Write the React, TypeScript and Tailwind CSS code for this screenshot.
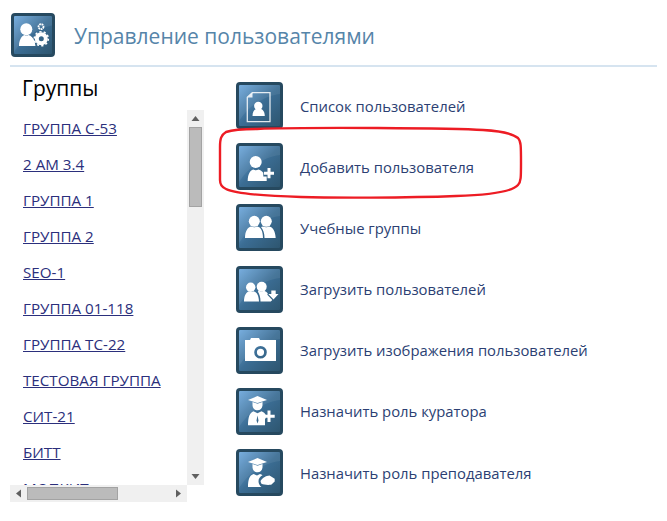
import type { ReactNode } from "react";

const groups = [
  "ГРУППА С-53",
  "2 АМ 3.4",
  "ГРУППА 1",
  "ГРУППА 2",
  "SEO-1",
  "ГРУППА 01-118",
  "ГРУППА ТС-22",
  "ТЕСТОВАЯ ГРУППА",
  "СИТ-21",
  "БИТТ",
  "МОПКИТ",
];

const graduate = (
  <>
    <path d="M9 9 18.500 5 28 9 18.500 12z" />
    <path d="M13.500 11l5 1.700 5-1.700v3.500c-.3 3-2.300 4.800-5 4.800s-4.700-1.800-5-4.800z" />
  </>
);

const actions: { label: string; icon: ReactNode }[] = [
  {
    label: "Список пользователей",
    icon: (
      <>
        <path
          d="M13.300 7.700H31v29H8.300V12.300z"
          fill="none"
          stroke="#fff"
          strokeWidth="1.300"
          opacity="0.85"
        />
        <path d="M8.800 12.500H13.500V7.800z" opacity="0.85" />
        <circle cx="19.300" cy="21" r="4.200" />
        <path d="M13.500 31c0-4.500 2-6.600 4-7.200 1.200.7 2.800.7 4 0 2 .6 4.300 2.700 4.300 7.200z" />
      </>
    ),
  },
  {
    label: "Добавить пользователя",
    icon: (
      <>
        <circle cx="16.700" cy="16" r="6" />
        <path d="M8.700 35c0-6.500 2.300-10.500 5.500-11.500 1.700 1 3.500 1 5.200 0 2 .5 3.700 1.600 4.900 3.300v3.700h3.400V35z" />
        <path d="M28.500 22h3v3.700H35v3h-3.500v3.600h-3v-3.600H25v-3h3.500z" />
      </>
    ),
  },
  {
    label: "Учебные группы",
    icon: (
      <>
        <circle cx="15.300" cy="14.300" r="5.500" />
        <circle cx="27.300" cy="14.300" r="5.500" />
        <path d="M6 31c0-6.500 2.500-10.500 6-11.500 2 1.100 4.500 1.100 6.500 0 3 .8 5.500 4 5.500 11.500z" />
        <path d="M25.500 31c0-4.500-1.200-8.300-3.500-11l2-.5c2 1.100 4.500 1.100 6.500 0 3 .8 5.800 4 6.200 11.500z" />
      </>
    ),
  },
  {
    label: "Загрузить пользователей",
    icon: (
      <>
        <circle cx="11.700" cy="18.300" r="4.700" />
        <circle cx="22.700" cy="17.700" r="5" />
        <path d="M5 32.500c0-5.500 2-9.500 5-10.300 1.500.8 3 .8 4.500 0 3 .8 5.300 4 5.500 10.300z" />
        <path d="M21.500 32.500c0-4-1-7.500-2.700-10l1-.7c1.500.8 3.700.8 5.200 0 1.500.4 2.800 1.300 3.800 2.600l-.5 1.400 5 5.200-1.500 1.500z" />
        <path d="M32.300 21.500h4.400V25h2.800L34.500 30.500 29.300 25h3z" />
      </>
    ),
  },
  {
    label: "Загрузить изображения пользователей",
    icon: (
      <path
        fillRule="evenodd"
        d="M6 10h5l1-2h8l1 2h16v21H6zM21.500 16a6.300 6.300 0 1 0 0 12.600 6.300 6.300 0 0 0 0-12.600zm0 2.700a3.600 3.600 0 1 1 0 7.200 3.600 3.600 0 0 1 0-7.200z"
      />
    ),
  },
  {
    label: "Назначить роль куратора",
    icon: (
      <>
        {graduate}
        <path
          fillRule="evenodd"
          d="M9 34.300c0-8 1.600-12.500 5.500-14l4 2 4-2c2 .7 3.500 2 4.300 3.700v3.500h-.8v6.800zM18.500 24.500l-1 5 1 3 1-3z"
        />
        <path d="M28.500 19.500h3v4.200h4.200v3h-4.200v4.200h-3v-4.200h-4.200v-3h4.200z" />
      </>
    ),
  },
  {
    label: "Назначить роль преподавателя",
    icon: (
      <>
        <g transform="translate(0 1)">{graduate}</g>
        <path d="M9 35c0-7.500 1.500-11.500 5.500-13l3.500 1.500 3-1.500c1 .3 1.800.7 2.500 1.300-2.300 1.200-4 3.200-4 6 0 2.500 1.300 4.500 3 5.700z" />
        <path d="M21.500 29c1.500-3 5.500-5.300 9-5.500l5.200 3.300v2.700l-3.500 3.300c-3.500.3-7.500.2-10-1.300z" />
      </>
    ),
  },
];

function Tile({ size, children }: { size: string; children: ReactNode }) {
  return (
    <div
      className={`relative shrink-0 overflow-hidden rounded-[4px] border-[3px] border-[#26495f] bg-linear-to-br from-[#6ea8dc] via-[#3b6d94] to-[#2e5670] ${size}`}
    >
      <svg className="absolute inset-0 size-full" fill="#fff">
        <path d="M0 0h41v9C26 11 10 20 0 36z" opacity="0.07" />
        {children}
      </svg>
    </div>
  );
}

function Arrow({ path }: { path: string }) {
  return (
    <svg viewBox="0 0 17 17" className="size-[17px] shrink-0">
      <path d={path} fill="#606060" />
    </svg>
  );
}

export default function App() {
  return (
    <div className="relative h-[521px] w-[667px] overflow-hidden bg-white pl-[10px] pr-[10px] pt-[13px] font-['Open_Sans','Noto_Sans',sans-serif]">
      <header className="flex h-[54px] items-start border-b-2 border-[#d6e4f0]">
        <div className="ml-px">
          <Tile size="size-[44px]">
            <circle cx="12.300" cy="13.300" r="6" />
            <path d="M5 30c0-6 2.500-10 5.500-11 1.300.7 2.700.7 4 0 2.500.8 5 3 6 6l1 5z" />
            <circle cx="27" cy="10.700" r="2.500" fill="none" stroke="#fff" strokeWidth="1.800" strokeDasharray="1.800 .6" />
            <circle cx="27.300" cy="22.700" r="4.500" fill="none" stroke="#fff" strokeWidth="4" />
            <circle cx="27.300" cy="22.700" r="7" fill="none" stroke="#fff" strokeWidth="1.600" strokeDasharray="2.200 2.200" />
          </Tile>
        </div>
        <h1 className="ml-[19px] mt-[5px] whitespace-nowrap text-[21px] leading-[36px] text-[#5685a9]">
          Управление пользователями
        </h1>
      </header>

      <div className="flex">
        <section className="w-[194px] shrink-0">
          <h2 className="ml-3 mt-[5px] h-[38px] text-[21px] leading-[32px] text-black">Группы</h2>
          <div className="flex h-[375px]">
            <ul className="h-full w-[177px] overflow-hidden pl-[13px] pt-[6px]">
              {groups.map((group) => (
                <li key={group} className="mb-[15.500px] h-[20.500px] whitespace-nowrap">
                  <a href="#" className="text-[15.200px] leading-[20px] text-[#2b2f7c] underline">
                    {group}
                  </a>
                </li>
              ))}
            </ul>
            <div className="flex w-[17px] flex-col bg-[#f0f0f0]">
              <Arrow path="M4.500 11 8.500 6l4 5z" />
              <div className="mx-[2px] h-[80px] border border-[#a3a3a3] bg-[#bbb]" />
              <div className="flex-1" />
              <Arrow path="M4.500 6h8l-4 5z" />
            </div>
          </div>
          <div className="flex h-[17px] w-[177px] items-center bg-[#f0f0f0]">
            <Arrow path="M11 4.500 6 8.500l5 4z" />
            <div className="h-[13px] w-[91px] border border-[#a3a3a3] bg-[#bbb]" />
            <div className="flex-1" />
            <Arrow path="M6 4.500 11 8.500l-5 4z" />
          </div>
        </section>

        <ul className="ml-[32px] flex flex-col gap-[14.200px] pt-[15px]">
          {actions.map((action) => (
            <li key={action.label} className="flex h-[47px] items-center gap-[17px]">
              <Tile size="size-[47px]">{action.icon}</Tile>
              <a href="#" className="whitespace-nowrap text-[14.850px] leading-[20px] text-[#2c3f73]">
                {action.label}
              </a>
            </li>
          ))}
        </ul>
      </div>

      {/* red hand-drawn marker over the second row */}
      <svg className="pointer-events-none absolute left-[215px] top-[123px]" width="312" height="80" fill="none">
        <path
          d="M42 6C90 4 240 5 268 7c18 1 30 4 35 8 3 3 3 8 3 25 0 14 0 19-3 22-6 7-28 10-62 11-50 2-125 2-155 1-35-1-65-3-75-8-5-2-6-5-6-9V24c0-8 1-12 6-15 6-2 17-3 31-3z"
          stroke="#ed1c24"
          strokeWidth="2.400"
        />
      </svg>
    </div>
  );
}
